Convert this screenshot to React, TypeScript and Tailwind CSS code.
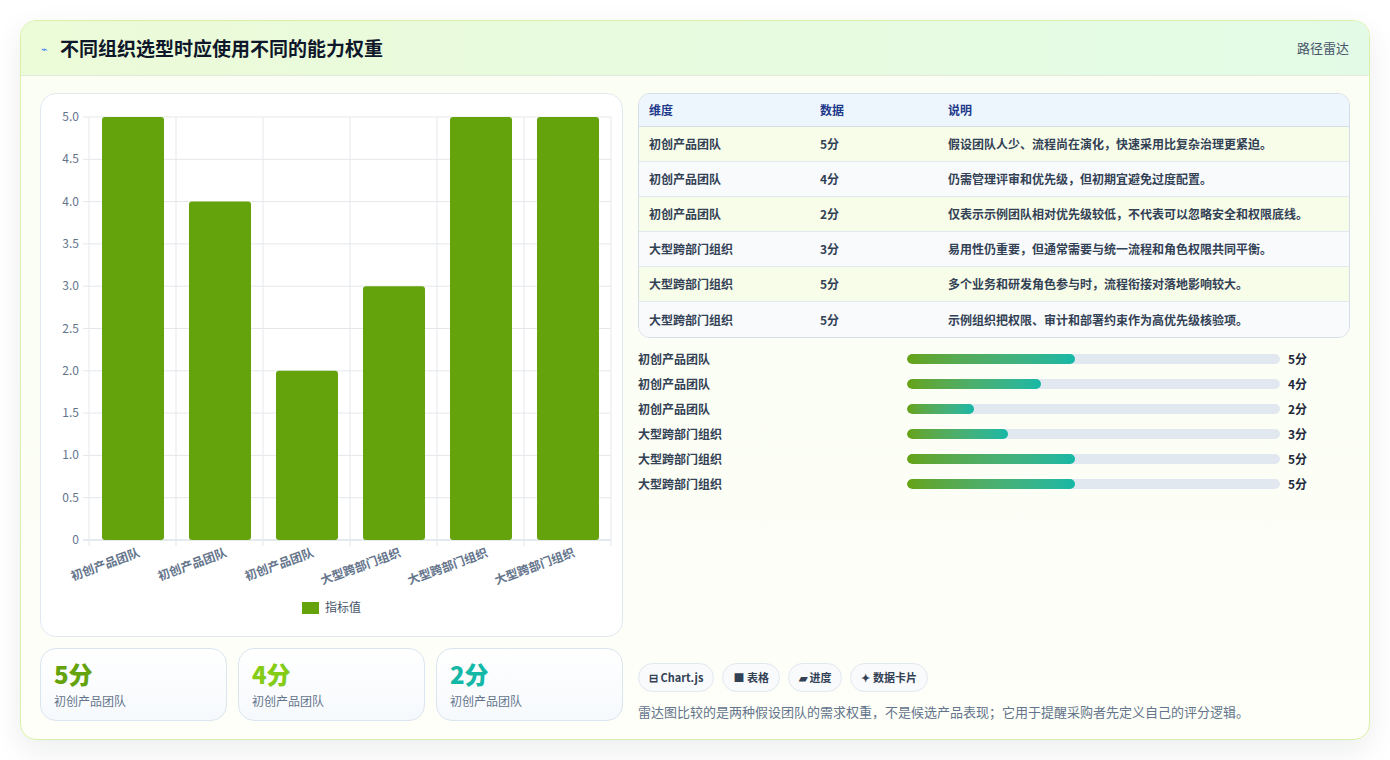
import React from "react";

const F = { fontFamily: '"Noto Sans CJK SC","Noto Sans",sans-serif' };
const cats = ["初创产品团队","初创产品团队","初创产品团队","大型跨部门组织","大型跨部门组织","大型跨部门组织"];
const vals = [5,4,2,3,5,5];
const rows = [
  ["初创产品团队","5分","假设团队人少、流程尚在演化，快速采用比复杂治理更紧迫。"],
  ["初创产品团队","4分","仍需管理评审和优先级，但初期宜避免过度配置。"],
  ["初创产品团队","2分","仅表示示例团队相对优先级较低，不代表可以忽略安全和权限底线。"],
  ["大型跨部门组织","3分","易用性仍重要，但通常需要与统一流程和角色权限共同平衡。"],
  ["大型跨部门组织","5分","多个业务和研发角色参与时，流程衔接对落地影响较大。"],
  ["大型跨部门组织","5分","示例组织把权限、审计和部署约束作为高优先级核验项。"],
];

function Chart() {
  const x0 = 48, x1 = 570, yTop = 23, yBot = 446;
  const cw = (x1 - x0) / 6;
  const ticks = [0,0.5,1,1.5,2,2.5,3,3.5,4,4.5,5];
  const y = (v: number) => yBot - (v / 5) * (yBot - yTop);
  return (
    <svg width="582" height="543" style={{ fontFamily: '"Noto Sans CJK SC",sans-serif' }}>
      {ticks.map(t => (
        <g key={t}>
          <line x1={x0 - 6} x2={x1} y1={y(t)} y2={y(t)} stroke={t === 0 ? "#cbd5e1" : "#e5e7eb"} />
          <text x={x0 - 10} y={y(t) + 4} textAnchor="end" fontSize="12" fill="#64748b">{t === 0 ? "0" : t.toFixed(1)}</text>
        </g>
      ))}
      {Array.from({ length: 7 }).map((_, i) => (
        <line key={i} x1={x0 + i * cw} x2={x0 + i * cw} y1={yTop} y2={yBot + 6} stroke="#e5e7eb" />
      ))}
      {vals.map((v, i) => (
        <rect key={i} x={x0 + i * cw + 13} width={cw - 25} y={y(v)} height={yBot - y(v)} rx="3" fill="#65a30d" />
      ))}
      {cats.map((c, i) => (
        <text key={i} transform={`translate(${x0 + i * cw + cw / 2 + 8},${yBot + 16}) rotate(-20)`} textAnchor="end" fontSize="12" fontWeight="600" fill="#64748b">{c}</text>
      ))}
      <rect x="261" y="508" width="17" height="12" fill="#65a30d" />
      <text x="284" y="518" fontSize="12" fill="#475569">指标值</text>
    </svg>
  );
}

export default function App() {
  return (
    <div className="w-[1390px] h-[760px] bg-white p-5" style={F}>
      <div className="h-[720px] w-[1350px] rounded-2xl border border-[#d9f0a8] shadow-[0_10px_30px_rgba(15,23,42,0.08)] overflow-hidden flex flex-col bg-gradient-to-b from-[#fbfef3] to-[#fdfff8]">
        <div className="h-[55px] shrink-0 flex items-center justify-between px-5 bg-gradient-to-r from-[#ecfbd8] to-[#e3fbe6] border-b border-[#e2eadc]">
          <div className="flex items-center gap-3">
            <span className="text-[11px] text-[#3b82f6]">⌁</span>
            <span className="text-[19px] font-bold text-[#0f172a]">不同组织选型时应使用不同的能力权重</span>
          </div>
          <span className="text-[13px] text-[#475569]">路径雷达</span>
        </div>
        <div className="flex gap-[15px] px-[19px] pt-[17px] pb-[18px] flex-1">
          <div className="w-[583px] flex flex-col gap-[11px]">
            <div className="h-[544px] rounded-2xl border border-[#e2e8f0] bg-white overflow-hidden"><Chart /></div>
            <div className="grid grid-cols-3 gap-[11px]">
              {[["5分","text-[#65a30d]"],["4分","text-[#84cc16]"],["2分","text-[#14b8a6]"]].map(([v, c]) => (
                <div key={v} className="h-[73px] rounded-2xl border border-[#dbe5f0] bg-gradient-to-b from-white to-[#f6f9fc] px-[13px] pt-[9px]">
                  <div className={`text-[24px] font-extrabold leading-[32px] ${c}`}>{v}</div>
                  <div className="text-[12px] text-[#64748b] mt-[2px]">初创产品团队</div>
                </div>
              ))}
            </div>
          </div>
          <div className="flex-1 flex flex-col">
            <div className="rounded-xl border border-[#d5dde8] overflow-hidden">
              <div className="grid grid-cols-[171px_128px_1fr] h-[33px] items-center px-[10px] bg-[#eef6fd] border-b border-[#d5dde8] text-[12px] font-semibold text-[#1e3a8a]">
                <span>维度</span><span>数据</span><span>说明</span>
              </div>
              {rows.map((r, i) => (
                <div key={i} className={`grid grid-cols-[171px_128px_1fr] h-[35px] items-center px-[10px] text-[12px] font-semibold text-[#334155] ${i < 5 ? "border-b border-[#e2e8f0]" : ""} ${i % 2 === 0 ? "bg-[#f8fdea]" : "bg-[#f8fafc]"}`}>
                  <span>{r[0]}</span><span>{r[1]}</span><span>{r[2]}</span>
                </div>
              ))}
            </div>
            <div className="flex flex-col mt-[8px]">
              {vals.map((v, i) => (
                <div key={i} className="grid grid-cols-[269px_373px_1fr] items-center h-[25px]">
                  <span className="text-[12px] font-semibold text-[#334155]">{cats[i]}</span>
                  <div className="h-[10px] rounded-full bg-[#e2e8f0] overflow-hidden">
                    <div className="h-full rounded-full bg-gradient-to-r from-[#65a30d] to-[#14b8a6]" style={{ width: `${v * 9}%` }} />
                  </div>
                  <span className="pl-[8px] text-[12px] font-bold text-[#1e293b]">{v}分</span>
                </div>
              ))}
            </div>
            <div className="mt-auto flex gap-2">
              {["⊟ Chart.js","■ 表格","▰ 进度","✦ 数据卡片"].map(t => (
                <span key={t} className="h-[29px] px-[10px] flex items-center rounded-full border border-[#e2e8f0] bg-[#f8fafc] text-[11px] font-bold text-[#334155]">{t}</span>
              ))}
            </div>
            <p className="mt-[10px] text-[13px] text-[#64748b]">雷达图比较的是两种假设团队的需求权重，不是候选产品表现；它用于提醒采购者先定义自己的评分逻辑。</p>
          </div>
        </div>
      </div>
    </div>
  );
}
